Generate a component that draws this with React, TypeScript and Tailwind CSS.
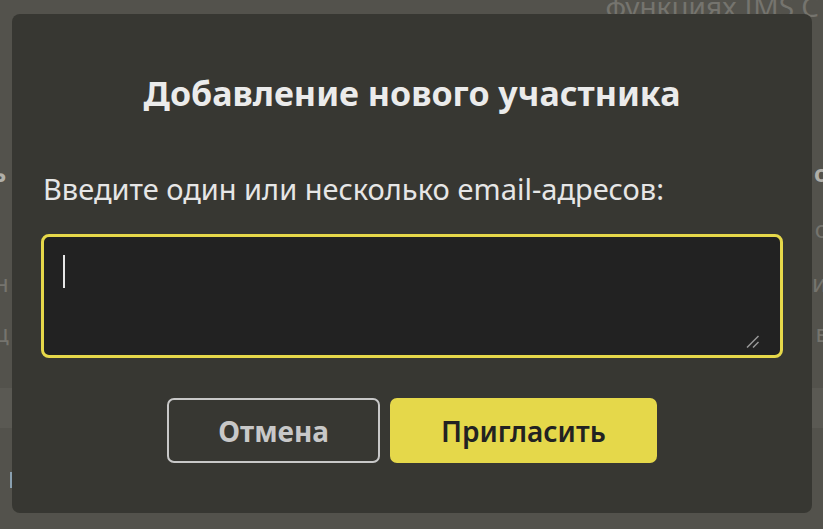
import React from "react";

const font = { fontFamily: '"Noto Sans", "Open Sans", sans-serif' };

function Backdrop() {
  // faded page that sits behind the dialog
  return (
    <div className="flex h-[529px] w-[823px] flex-col overflow-hidden bg-[#53524c] text-[#75746e]" style={font}>
      <div className="flex h-[40px] items-start justify-end pr-[4px]">
        <span className="-mt-[12px] text-[28px] leading-[36px] whitespace-nowrap">функциях IMS C</span>
      </div>
      <div className="mt-[113px] flex h-[40px] items-center justify-between">
        <span className="-ml-[8px] text-[24px] font-bold text-[#b0afa9]">ь</span>
        <span className="-mr-[6px] text-[24px] font-bold text-[#b0afa9]">о</span>
      </div>
      <div className="mt-[16px] flex h-[40px] items-center justify-end">
        <span className="-mr-[6px] text-[24px]">о</span>
      </div>
      <div className="mt-[14px] flex h-[40px] items-center justify-between">
        <span className="-ml-[6px] text-[24px]">н</span>
        <span className="-mr-[4px] text-[24px]">и</span>
      </div>
      <div className="mt-[10px] flex h-[40px] items-center justify-between">
        <span className="-ml-[6px] text-[24px]">ц</span>
        <span className="-mr-[6px] text-[24px]">в</span>
      </div>
      <div className="mt-[35px] h-[40px] bg-[#5a5953]" />
      <div className="mt-[42px] flex h-[20px] items-center">
        <span className="ml-[10px] h-[16px] w-[2px] bg-[#8aa0b0]" />
      </div>
    </div>
  );
}

function InviteDialog() {
  return (
    <div
      className="absolute left-[12px] top-[14px] flex h-[499px] w-[800px] flex-col items-center rounded-[8px] bg-[#373732] px-[29px] pt-[57px]"
      style={font}
    >
      <h2 className="text-[34px] font-bold leading-[44px] text-[#ebebeb]">Добавление нового участника</h2>
      <label className="mt-[56px] self-start pl-[2px] text-[29px] leading-[36px] text-[#e6e6e6]">
        Введите один или несколько email-адресов:
      </label>
      <div className="relative mt-[27px] w-full">
        <textarea
          autoFocus
          className="block h-[124px] w-full resize-none rounded-[8px] border-[3px] border-[#e6d84a] bg-[#222222] px-[20px] py-[17px] text-[26px] text-[#e6e6e6] caret-[#e6e6e6] outline-none"
          style={font}
        />
        {/* caret + resize grip, as in the capture */}
        <span className="pointer-events-none absolute left-[22px] top-[21px] h-[33px] w-[2px] bg-[#e6e6e6]" />
        <svg
          className="pointer-events-none absolute bottom-[10px] right-[24px]"
          width="13"
          height="13"
          viewBox="0 0 13 13"
        >
          <path d="M1 12.5 L12.5 1" stroke="#9a9a9a" strokeWidth="1.5" />
          <path d="M7 12.5 L12.5 7" stroke="#9a9a9a" strokeWidth="1.5" />
        </svg>
      </div>
      <div className="mt-[40px] flex gap-[10px]">
        <button className="h-[65px] rounded-[7px] border-2 border-[#c8c8c8] bg-transparent px-[49px] text-[28px] font-bold text-[#c8c8c8]">
          Отмена
        </button>
        <button className="h-[65px] rounded-[7px] border-2 border-[#e5d84a] bg-[#e5d84a] px-[49px] text-[28px] font-semibold text-[#222222]">
          Пригласить
        </button>
      </div>
    </div>
  );
}

export default function App() {
  return (
    <div className="relative h-[529px] w-[823px] overflow-hidden">
      <Backdrop />
      <InviteDialog />
    </div>
  );
}
